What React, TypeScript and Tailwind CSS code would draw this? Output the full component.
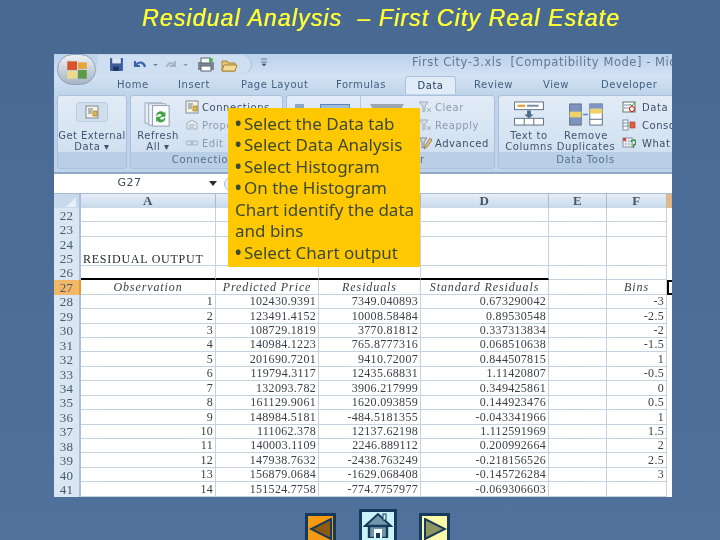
const rows = [
  ["1","102430.9391","7349.040893","0.673290042","-3"],
  ["2","123491.4152","10008.58484","0.89530548","-2.5"],
  ["3","108729.1819","3770.81812","0.337313834","-2"],
  ["4","140984.1223","765.8777316","0.068510638","-1.5"],
  ["5","201690.7201","9410.72007","0.844507815","1"],
  ["6","119794.3117","12435.68831","1.11420807","-0.5"],
  ["7","132093.782","3906.217999","0.349425861","0"],
  ["8","161129.9061","1620.093859","0.144923476","0.5"],
  ["9","148984.5181","-484.5181355","-0.043341966","1"],
  ["10","111062.378","12137.62198","1.112591969","1.5"],
  ["11","140003.1109","2246.889112","0.200992664","2"],
  ["12","147938.7632","-2438.763249","-0.218156526","2.5"],
  ["13","156879.0684","-1629.068408","-0.145726284","3"],
  ["14","151524.7758","-774.7757977","-0.069306603",""],
];

function Head({ w, label, active }: { w: string; label: string; active?: boolean }) {
  return (
    <div className={`${w} shrink-0 h-full flex items-center justify-center border-r border-[#a9bdd2] text-[13px] text-[#4a5560] ${active ? "bg-[#f3b867]" : "bg-gradient-to-b from-[#e6eef8] to-[#c9d9ea]"}`}>
      {label}
    </div>
  );
}

function Cell({ w, children, align = "right", italic, black, noLine }: { w: string; children?: React.ReactNode; align?: string; italic?: boolean; black?: boolean; noLine?: boolean }) {
  return (
    <div className={`${w} shrink-0 h-full px-[2px] flex items-end overflow-hidden whitespace-nowrap border-r border-r-[#c6d2de] ${black ? "border-b-2 border-b-black" : noLine ? "" : "border-b border-b-[#c6d2de]"} ${align === "right" ? "justify-end" : align === "center" ? "justify-center" : "justify-start"} ${italic ? "italic tracking-[0.9px]" : ""}`}>
      {children}
    </div>
  );
}

function Row({ n, a, b, c, d, f, active, italic, black, noLine, leftA }: { n: number; a?: React.ReactNode; b?: React.ReactNode; c?: React.ReactNode; d?: React.ReactNode; f?: React.ReactNode; active?: boolean; italic?: boolean; black?: boolean; noLine?: boolean; leftA?: boolean }) {
  const al = italic ? "center" : "right";
  return (
    <div className="flex h-[14.45px] shrink-0 leading-[13px]">
      <div className={`w-[27px] shrink-0 flex items-center justify-center border-r-2 text-[13px] text-[#4a5a6c] ${active ? "bg-[#f3b867] border-r-[#e09a3f]" : "bg-[#dbe6f3] border-r-[#a9c0da]"}`}>{n}</div>
      <Cell w="w-[135px]" align={leftA ? "left" : al} italic={italic} black={black} noLine={noLine}>{a}</Cell>
      <Cell w="w-[103px]" align={al} italic={italic} black={black} noLine={noLine}>{b}</Cell>
      <Cell w="w-[102px]" align={al} italic={italic} black={black} noLine={noLine}>{c}</Cell>
      <Cell w="w-[128px]" align={al} italic={italic} black={black} noLine={noLine}>{d}</Cell>
      <Cell w="w-[58px]" noLine={noLine} />
      <Cell w="w-[60px]" align={al} italic={italic} noLine={noLine}>{f}</Cell>
      {italic ? <div className="w-[5px] h-full border-2 border-r-0 border-black bg-white" /> : null}
    </div>
  );
}

function SmallItem({ icon, label, dim, gap = "gap-[3px]" }: { icon: React.ReactNode; label: string; dim?: boolean; gap?: string }) {
  return (
    <div className={`flex items-center ${gap} h-[18.5px] whitespace-nowrap ${dim ? "text-[#8c9bad]" : "text-[#3d5068]"}`}>
      <span className="w-[14px] h-[14px] shrink-0">{icon}</span>
      <span>{label}</span>
    </div>
  );
}

const DocIcon = () => (
  <svg viewBox="0 0 14 14" className="w-full h-full">
    <rect x="1" y="1" width="12" height="12" fill="#f7f3df" stroke="#7f8c9c" />
    <path d="M3 4h5M3 6h4M3 8h4" stroke="#6b7c92" />
    <rect x="8" y="6" width="4" height="5" fill="#e0b84c" stroke="#8a6d1c" strokeWidth=".6" />
  </svg>
);
const GrayDoc = () => (
  <svg viewBox="0 0 14 14" className="w-full h-full">
    <path d="M2 5l5-3 5 3v6H2z" fill="#e4e9ef" stroke="#a3afbd" />
    <path d="M4 7h6M4 9h5" stroke="#a3afbd" />
  </svg>
);
const LinkIcon = () => (
  <svg viewBox="0 0 14 14" className="w-full h-full">
    <rect x="1" y="5" width="7" height="4" rx="2" fill="none" stroke="#a3afbd" />
    <rect x="6" y="5" width="7" height="4" rx="2" fill="none" stroke="#a3afbd" />
  </svg>
);
const ClearIcon = ({ c = "#a3afbd" }: { c?: string }) => (
  <svg viewBox="0 0 14 14" className="w-full h-full">
    <path d="M1 2h9L7 6v5L5 12V6z" fill="#d4dce6" stroke={c} />
    <path d="M9 8l4 4M13 8l-4 4" stroke={c} />
  </svg>
);
const AdvIcon = () => (
  <svg viewBox="0 0 14 14" className="w-full h-full">
    <path d="M1 2h8L6 6v5L4 12V6z" fill="#d0d6dd" stroke="#7d8a99" />
    <path d="M12 2L7 10l-1 3 3-2 5-7z" fill="#e8c77a" stroke="#8a6d3c" strokeWidth=".8" />
  </svg>
);
const DV = () => (
  <svg viewBox="0 0 14 14" className="w-full h-full">
    <rect x="1" y="2" width="12" height="10" fill="#fff" stroke="#5d7a5d" />
    <path d="M2 5h6M2 8h5" stroke="#7a8ea6" />
    <circle cx="10" cy="9" r="2.5" fill="none" stroke="#c9302c" strokeWidth="1.2" />
    <path d="M8 4l2 2 3-4" stroke="#3d8f3d" fill="none" />
  </svg>
);
const Cons = () => (
  <svg viewBox="0 0 14 14" className="w-full h-full">
    <rect x="1" y="2" width="5" height="10" fill="#fff" stroke="#7a8ea6" />
    <path d="M1 5h5M1 8h5" stroke="#7a8ea6" />
    <rect x="8" y="4" width="5" height="6" fill="#e2603f" stroke="#a33" strokeWidth=".6" />
    <path d="M6 7h2" stroke="#3d6" />
  </svg>
);
const WhatIf = () => (
  <svg viewBox="0 0 14 14" className="w-full h-full">
    <rect x="1" y="2" width="9" height="9" fill="#fff" stroke="#7a8ea6" />
    <path d="M1 5h9M1 8h9M4 2v9M7 2v9" stroke="#b3c2d3" />
    <rect x="1" y="2" width="3" height="3" fill="#d9483b" />
    <path d="M9 6a2.5 2.5 0 1 1 2.5 3v3" stroke="#3d8f3d" strokeWidth="1.4" fill="none" />
  </svg>
);

function Group({ w, label, children, noLeft }: { w: string; label?: string; children: React.ReactNode; noLeft?: boolean }) {
  return (
    <div className={`${w} shrink-0 h-full flex flex-col rounded-[3px] border border-[#a9c1dc] ${noLeft ? "border-r-0 rounded-r-none" : ""} bg-gradient-to-b from-[#e2ecf7] to-[#ccdcee] overflow-hidden`}>
      <div className="flex-1 min-h-0 flex">{children}</div>
      <div className="h-[16px] shrink-0 bg-[#b9cfe6] text-center text-[10px] leading-[15px] tracking-[0.7px] text-[#58708e] whitespace-nowrap">{label}</div>
    </div>
  );
}

function Bullet({ children }: { children: React.ReactNode }) {
  return (
    <p className="whitespace-nowrap flex items-baseline">
      <span className="w-[9px] shrink-0 font-bold">•</span>
      <span>{children}</span>
    </p>
  );
}

export default function App() {
  return (
    <div className="relative w-[720px] h-[540px] overflow-hidden flex flex-col items-start bg-gradient-to-b from-[#486992] to-[#4f719c] font-['Liberation_Sans',sans-serif]">
      <h1 className="w-full h-[54px] shrink-0 pt-[5px] pl-[142px] text-[23px] leading-[27px] tracking-[1.15px] italic font-normal text-[#ffff33] whitespace-pre [text-shadow:0_0_0.4px_#ffff33]">
        Residual Analysis  – First City Real Estate
      </h1>

      {/* Excel window */}
      <div className="ml-[54px] w-[618px] h-[443px] shrink-0 flex flex-col overflow-hidden bg-white text-[10px] tracking-[0.55px] font-['DejaVu_Sans',sans-serif] blur-[0.3px]">
        {/* title bar */}
        <div className="h-[22px] shrink-0 flex items-start pt-[1px] bg-gradient-to-b from-[#bad2ec] to-[#d3e2f3] relative">
          <div className="w-[44px] shrink-0" />
          <div className="w-[154px] h-[19px] shrink-0 pl-[11px] flex items-center rounded-r-full bg-[#cfdff2] border-r border-[#a6bdd8]">
            <svg viewBox="0 0 14 14" className="w-[15px] h-[15px] shrink-0"><rect x="1" y="1" width="12" height="12" fill="#3d5c9e" /><rect x="3" y="1" width="8" height="5" fill="#dfe6f2" /><rect x="4" y="9" width="5" height="4" fill="#20335f" /></svg>
            <svg viewBox="0 0 26 14" className="w-[26px] h-[14px] ml-[9px] shrink-0"><path d="M2 3v5h5" stroke="#3f63a8" strokeWidth="2.2" fill="none" /><path d="M3 7c3-4 8-3 9 2" stroke="#3f63a8" strokeWidth="2.2" fill="none" /><path d="M20 6h5l-2.5 2z" fill="#6f7f92" /></svg>
            <svg viewBox="0 0 26 14" className="w-[26px] h-[14px] ml-[5px] shrink-0"><path d="M11 3v5H6" stroke="#a9b4c2" strokeWidth="2" fill="none" /><path d="M10 7C8 4 4 4 3 9" stroke="#a9b4c2" strokeWidth="2" fill="none" /><path d="M19 6h5l-2.5 2z" fill="#8a99ab" /></svg>
            <svg viewBox="0 0 18 15" className="w-[18px] h-[15px] ml-[7px] shrink-0"><rect x="1" y="5" width="16" height="8" fill="#7d8896" /><rect x="4" y="1" width="9" height="5" fill="#f6f7f9" stroke="#5d6670" /><rect x="4" y="9" width="10" height="5" fill="#fff" stroke="#5d6670" /><circle cx="14" cy="3" r="2" fill="#4caf50" /></svg>
            <svg viewBox="0 0 17 14" className="w-[17px] h-[14px] ml-[6px] shrink-0"><path d="M1 3h5l1 2h7v8H1z" fill="#e8c36c" stroke="#a88532" /><path d="M3 7h13l-2 6H1z" fill="#f4dc97" stroke="#a88532" /></svg>
          </div>
          <svg viewBox="0 0 6 8" className="ml-[9px] mt-[3px] w-[6px] h-[8px] shrink-0"><path d="M0 1h6M0 4h6M1 6h4L3 8z" stroke="#4b6078" fill="#4b6078" strokeWidth=".8" /></svg>
          <span className="w-[145px] shrink-0" />
          <span className="whitespace-pre text-[#64788e] text-[11.5px] leading-[15px]">First City-3.xls  [Compatibility Mode] - Mic</span>
          {/* Office button */}
          <div className="absolute left-[3px] top-0 w-[39px] h-[31px] rounded-full border border-[#8fa3ba] bg-gradient-to-b from-[#eef1f4] to-[#a8b5c4] flex items-center justify-center">
            <svg viewBox="0 0 24 20" className="w-[26px] h-[22px]">
              <rect x="3" y="2" width="9" height="8" fill="#d9542b" />
              <rect x="13" y="3" width="8" height="6" fill="#e8a53a" />
              <rect x="3" y="11" width="9" height="7" fill="#ecd98a" />
              <rect x="13" y="10" width="8" height="8" fill="#5d9a47" />
            </svg>
          </div>
        </div>

        {/* tabs */}
        <div className="h-[18px] shrink-0 flex items-start pt-[1px] bg-gradient-to-b from-[#d3e2f3] to-[#bfd4ea] text-[#44607f] text-[10px] leading-[16px] whitespace-nowrap">
          <span className="ml-[63px] w-[61px]">Home</span>
          <span className="w-[63px]">Insert</span>
          <span className="w-[95px]">Page Layout</span>
          <span className="w-[69px]">Formulas</span>
          <span className="w-[51px] h-[18px] mt-[-1px] pt-[1px] rounded-t-[3px] border border-b-0 border-[#a9c1dc] bg-[#e2ecf7] text-center text-[#26405e]">Data</span>
          <span className="ml-[18px] w-[69px]">Review</span>
          <span className="w-[58px]">View</span>
          <span>Developer</span>
        </div>

        {/* ribbon */}
        <div className="h-[80px] shrink-0 flex gap-[3px] pl-[3px] pt-[1px] pb-[3px] bg-[#bfd4ea] border-b-2 border-[#8fa9c6] text-[10px] leading-[11px]">
          <Group w="w-[70px]">
            <div className="w-full flex flex-col items-center pt-[6px] text-[#40566f] text-center">
              <div className="w-[32px] h-[25px] rounded-[3px] bg-[#d0deee] border border-[#bccee2] flex items-center justify-center mb-[8px]">
                <span className="w-[14px] h-[14px]"><DocIcon /></span>
              </div>
              <span className="whitespace-nowrap tracking-[0.4px]">Get External</span>
              <span>Data ▾</span>
            </div>
          </Group>
          <Group w="w-[153px]" label="Connections">
            <div className="w-[54px] shrink-0 flex flex-col items-center pt-[5px] text-[#40566f]">
              <svg viewBox="0 0 30 28" className="w-[30px] h-[28px] mb-[3px]">
                <rect x="1" y="2" width="18" height="22" fill="#e6edf5" stroke="#9aa8b8" />
                <rect x="5" y="3" width="18" height="23" fill="#eef3f9" stroke="#9aa8b8" />
                <rect x="9" y="5" width="18" height="22" fill="#fbfcfe" stroke="#8d9cad" />
                <path d="M13 16a5 5 0 0 1 9-3l1-2v6h-6l2-2a3 3 0 0 0-5 1z" fill="#3fa142" />
                <path d="M23 18a5 5 0 0 1-9 3l-1 2v-6h6l-2 2a3 3 0 0 0 5-1z" fill="#3fa142" />
              </svg>
              <span>Refresh</span>
              <span>All ▾</span>
            </div>
            <div className="flex flex-col pt-[2px]">
              <SmallItem icon={<DocIcon />} label="Connections" />
              <SmallItem icon={<GrayDoc />} label="Properties" dim />
              <SmallItem icon={<LinkIcon />} label="Edit Links" dim />
            </div>
          </Group>
          <Group w="w-[209px]" label="Sort & Filter">
            <div className="w-[74px] shrink-0 border-r border-[#b5c9df] flex items-start pt-[8px] pl-[8px]">
              <span className="w-[9px] h-[10px] bg-[#8da6c4] shrink-0" />
              <span className="ml-[16px] w-[30px] h-[10px] bg-[#9cbce0] border border-[#5d86b8] shrink-0" />
            </div>
            <div className="w-[57px] shrink-0 pt-[8px] pl-[9px]">
              <svg viewBox="0 0 34 10" className="w-[34px] h-[10px]"><path d="M0 0h34L28 10H6z" fill="#9aa5b2" /></svg>
            </div>
            <div className="flex flex-col pt-[2px]">
              <SmallItem icon={<ClearIcon />} label="Clear" dim />
              <SmallItem icon={<ClearIcon />} label="Reapply" dim />
              <SmallItem icon={<AdvIcon />} label="Advanced" />
            </div>
          </Group>
          <Group w="w-[174px]" label="Data Tools" noLeft>
            <div className="w-[60px] shrink-0 flex flex-col items-center pt-[5px] text-[#40566f] whitespace-nowrap">
              <svg viewBox="0 0 32 26" className="w-[32px] h-[26px] mb-[4px]">
                <rect x="1" y="1" width="30" height="8" fill="#fff" stroke="#5b6e84" />
                <path d="M4 5h8" stroke="#e39a2b" strokeWidth="2" /><path d="M14 5h12" stroke="#7a8ea6" strokeWidth="2" />
                <path d="M14 10h4v4h3l-5 4-5-4h3z" fill="#4d6a89" />
                <rect x="1" y="18" width="30" height="7" fill="#fff" stroke="#5b6e84" />
                <path d="M11 18v7M21 18v7" stroke="#5b6e84" />
              </svg>
              <span>Text to</span>
              <span>Columns</span>
            </div>
            <div className="w-[54px] shrink-0 flex flex-col items-center pt-[7px] text-[#40566f] whitespace-nowrap">
              <svg viewBox="0 0 36 24" className="w-[36px] h-[24px] mb-[4px]">
                <rect x="1" y="1" width="12" height="22" fill="#7d93c2" stroke="#5b6e84" />
                <rect x="1" y="9" width="12" height="6" fill="#efd267" />
                <path d="M15 12h5" stroke="#4d8ac9" strokeWidth="1.5" />
                <rect x="22" y="1" width="13" height="22" fill="#fff" stroke="#5b6e84" />
                <rect x="22" y="1" width="13" height="5" fill="#7d93c2" />
                <rect x="22" y="6" width="13" height="5" fill="#efd267" />
                <path d="M22 17h13" stroke="#5b6e84" />
              </svg>
              <span>Remove</span>
              <span>Duplicates</span>
            </div>
            <div className="flex flex-col pt-[2px] ml-[9px]">
              <SmallItem icon={<DV />} label="Data V" gap="gap-[6px]" />
              <SmallItem icon={<Cons />} label="Conso" gap="gap-[6px]" />
              <SmallItem icon={<WhatIf />} label="What" gap="gap-[6px]" />
            </div>
          </Group>
        </div>

        {/* formula bar */}
        <div className="h-[20px] shrink-0 flex items-center bg-white border-b border-[#a9bdd2] text-[#3f4d5d] text-[11px]">
          <span className="w-[148px] text-center pl-[3px]">G27</span>
          <svg viewBox="0 0 8 5" className="w-[8px] h-[5px] ml-[7px]"><path d="M0 0h8L4 5z" fill="#2d2d2d" /></svg>
          <span className="ml-[7px] w-[14px] h-[14px] rounded-full border border-[#a9bdd2] bg-[#e6eef8] shrink-0" />
        </div>

        {/* column headers */}
        <div className="h-[14px] shrink-0 flex font-['Liberation_Serif',serif] font-bold">
          <div className="w-[27px] shrink-0 bg-[#c8d9ec] border-r-2 border-[#a9c0da] flex items-end justify-end">
            <svg viewBox="0 0 10 10" className="w-[10px] h-[10px] mr-[3px] mb-[1px]"><path d="M10 0v10H0z" fill="#e8eff7" /></svg>
          </div>
          <Head w="w-[135px]" label="A" />
          <Head w="w-[103px]" label="B" />
          <Head w="w-[102px]" label="C" />
          <Head w="w-[128px]" label="D" />
          <Head w="w-[58px]" label="E" />
          <Head w="w-[60px]" label="F" />
          <Head w="flex-1 min-w-0" label="" active />
        </div>

        {/* sheet */}
        <div className="flex-1 min-h-0 flex flex-col overflow-hidden text-[12px] tracking-[0.3px] text-[#3a3f45] font-['Liberation_Serif',serif]">
          <Row n={22} />
          <Row n={23} />
          <Row n={24} noLine />
          <Row n={25} leftA a={<span className="text-[#262a2e] translate-y-[1px] tracking-[0.75px]">RESIDUAL OUTPUT</span>} />
          <Row n={26} black />
          <Row n={27} active italic a="Observation" b="Predicted Price" c="Residuals" d="Standard Residuals" f="Bins" />
          {rows.map((r, i) => (
            <Row key={i} n={28 + i} a={r[0]} b={r[1]} c={r[2]} d={r[3]} f={r[4]} />
          ))}
        </div>
      </div>

      {/* callout */}
      <div className="absolute left-[228px] top-[108px] w-[192px] h-[159px] bg-[#ffc800] pl-[7px] pt-[4.5px] text-[17px] leading-[21.5px] text-[#3b4a36] font-['Noto_Sans',sans-serif] blur-[0.2px]">
        <Bullet>Select the Data tab</Bullet>
        <Bullet>Select Data Analysis</Bullet>
        <Bullet>Select Histogram</Bullet>
        <Bullet>On the Histogram</Bullet>
        <p className="whitespace-nowrap">Chart identify the data</p>
        <p className="whitespace-nowrap">and bins</p>
        <Bullet>Select Chart output</Bullet>
      </div>

      {/* nav buttons */}
      <div className="ml-[305px] mt-[12px] flex items-start shrink-0">
        <div className="mt-[4px] w-[31px] h-[30px] border-[3px] border-[#163a5c] bg-[#f59a12] flex items-start pt-[2px] justify-center">
          <svg viewBox="0 0 24 22" className="w-[24px] h-[22px]"><path d="M22 1v20L2 11z" fill="#8f5a10" stroke="#163a5c" strokeWidth="2" /></svg>
        </div>
        <div className="ml-[23px] w-[38px] h-[34px] border-[3px] border-[#163a5c] bg-[#c9f3fb] flex items-start justify-center">
          <svg viewBox="0 0 30 26" className="w-[30px] h-[26px]">
            <path d="M2 14L15 2l13 12z" fill="#6f97a8" stroke="#163a5c" strokeWidth="2" />
            <rect x="20" y="2" width="3" height="6" fill="#c9f3fb" stroke="#163a5c" />
            <path d="M6 14h18v12H6z" fill="#6f97a8" stroke="#163a5c" strokeWidth="2.4" />
            <rect x="11" y="17" width="8" height="9" fill="#f5fcff" />
            <rect x="13" y="21" width="4" height="5" fill="#163a5c" />
          </svg>
        </div>
        <div className="ml-[22px] mt-[4px] w-[31px] h-[30px] border-[3px] border-[#163a5c] bg-[#fdf9a8] flex items-start pt-[2px] justify-center">
          <svg viewBox="0 0 24 22" className="w-[24px] h-[22px]"><path d="M2 1v20l20-10z" fill="#8f9560" stroke="#163a5c" strokeWidth="2" /></svg>
        </div>
      </div>
    </div>
  );
}
